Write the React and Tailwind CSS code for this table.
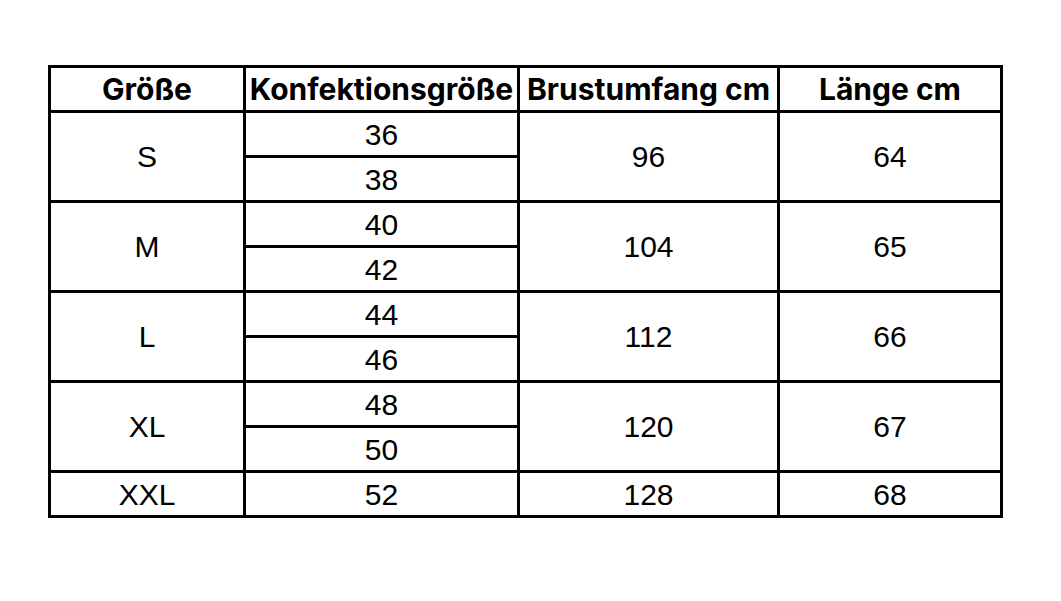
import React from 'react';

const groups = [
    { size: 'S', konf: ['36', '38'], brust: '96', laenge: '64' },
    { size: 'M', konf: ['40', '42'], brust: '104', laenge: '65' },
    { size: 'L', konf: ['44', '46'], brust: '112', laenge: '66' },
    { size: 'XL', konf: ['48', '50'], brust: '120', laenge: '67' },
    { size: 'XXL', konf: ['52'], brust: '128', laenge: '68' },
];

const cell = 'bg-white flex items-center justify-center';

export default function App() {
    return (
        <div className="min-h-screen bg-white pl-[48px] pt-[65px] text-black font-['Liberation_Sans',Arial,sans-serif]">
            <div className="inline-grid grid-cols-[192px_271px_257px_220px] grid-rows-[repeat(10,42px)] gap-[3px] p-[3px] bg-black">
                {['Größe', 'Konfektionsgröße', 'Brustumfang cm', 'Länge cm'].map((h) => (
                    <div key={h} className={`${cell} font-['Inter',sans-serif] text-[30px] font-bold whitespace-nowrap`}>
                        {h}
                    </div>
                ))}
                {groups.map((g) => {
                    const span = g.konf.length > 1 ? 'row-span-2' : '';
                    return (
                        <React.Fragment key={g.size}>
                            <div className={`${cell} ${span} text-[30px]`}>{g.size}</div>
                            <div className={`${cell} text-[30px]`}>{g.konf[0]}</div>
                            <div className={`${cell} ${span} text-[30px]`}>{g.brust}</div>
                            <div className={`${cell} ${span} text-[30px]`}>{g.laenge}</div>
                            {g.konf[1] && <div className={`${cell} text-[30px]`}>{g.konf[1]}</div>}
                        </React.Fragment>
                    );
                })}
            </div>
        </div>
    );
}
